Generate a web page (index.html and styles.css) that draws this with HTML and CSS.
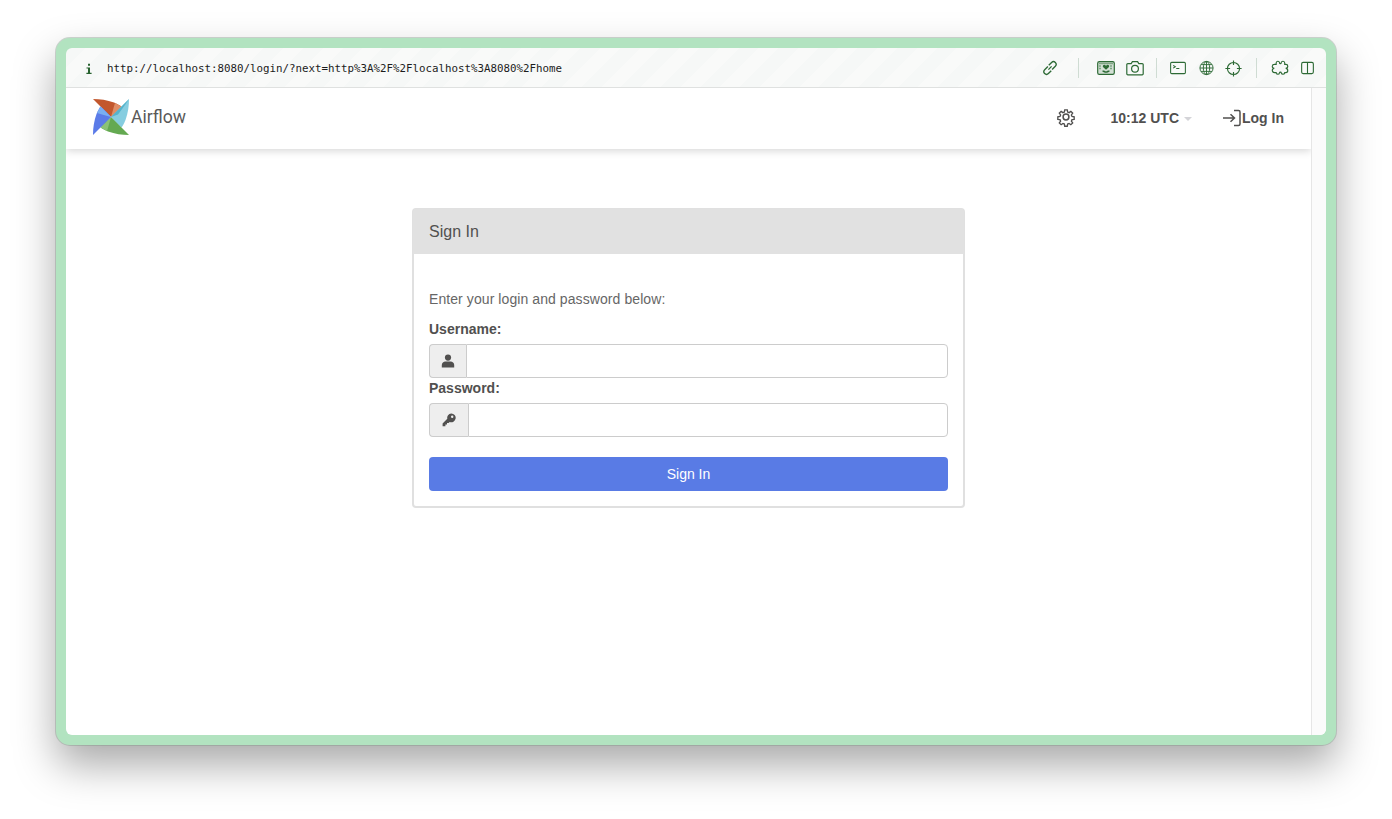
FILE: index.html
```html
<!DOCTYPE html>
<html>
  <head>
    <title>Airflow - Sign In</title>
    <meta charset="utf-8" />
    <link rel="stylesheet" href="styles.css">
  </head>
  <body>
    <div class="frame">
      <div class="toolbar">
        <svg class="info" viewBox="0 0 8 12"><path d="M3 .8h2v2H3zM1.500 4.400H5v5.400h1.600V11H1.400V9.800H3V5.600H1.500z"/></svg>
        <span class="url">http://localhost:8080/login/?next=http%3A%2F%2Flocalhost%3A8080%2Fhome</span>
        <div class="tools">
          <svg class="tool tool-link" viewBox="0 0 18 18"><path d="M7.200 10.800 10.800 7.200M6.600 7.400 3 11a3 3 0 0 0 0 4.200 3 3 0 0 0 4.200 0l3.200-3.200M7.600 6l3.200-3.200a3 3 0 0 1 4.200 0 3 3 0 0 1 0 4.200L11.400 10.600"/></svg>
          <i class="sep sep-a"></i>
          <svg class="tool tool-shot" viewBox="0 0 18 16"><rect x=".7" y="1.700" width="16.600" height="12.600" rx="1.600" fill="#d3e0d5"/><path class="dots" d="M2.500 3.500h13M2.500 6h2M13.500 6h2M2.500 8.500h2M13.500 8.500h2"/><path class="solid" d="M9 9.800 6 7a1.500 1.500 0 0 1 2-2.100l1 .8 1-.8A1.500 1.500 0 0 1 12 7z"/><path class="solid" d="M5.500 10.500h1.500l2 1 2-1h1.500v1.200l-2.500 1h-2l-2.500-1z"/></svg>
          <svg class="tool tool-camera" viewBox="0 0 18 16"><path d="M1.800 3.600h3.400L6.400 1.600h5.200l1.200 2h3.400a1 1 0 0 1 1 1v9.200a1 1 0 0 1-1 1H1.800a1 1 0 0 1-1-1V4.600a1 1 0 0 1 1-1z"/><circle cx="9" cy="8.800" r="3.400"/></svg>
          <i class="sep sep-b"></i>
          <svg class="tool tool-term" viewBox="0 0 18 16"><rect x=".7" y="1.700" width="16.600" height="12.600" rx="1.200"/><path d="M3.600 5 6 6.600 3.600 8.200M7 8.600h3.500"/></svg>
          <svg class="tool tool-globe" viewBox="0 0 16 16"><circle cx="8" cy="8" r="7"/><ellipse cx="8" cy="8" rx="3.400" ry="7"/><path d="M8 1v14M1 8h14M2.200 4.400h11.600M2.200 11.600h11.600"/></svg>
          <svg class="tool tool-target" viewBox="0 0 18 18"><circle cx="9" cy="9" r="6.400"/><path d="M9 .4v5M9 12.600v5M.4 9h5M12.600 9h5"/></svg>
          <i class="sep sep-c"></i>
          <svg class="tool tool-puzzle" viewBox="0 0 20 16"><path d="M6.500 2.800c0-2.400 3.400-2.400 3.500-.4 0 1.400 1.800 1.400 1.800 0 .1-2 3.700-2 3.700.4v1.400h1.200c2.600 0 2.800 4-.2 4.200 3 .2 2.800 4.400.2 4.400h-1.200v.4c0 1.600-3.200 1.800-3.500.2-.3-1.400-1.900-1.400-2.100 0-.3 1.600-3.400 1.400-3.400-.2v-.4H4.800c-3 0-3.300-4.200-.3-4.400-3-.2-2.700-4.200.3-4.200h1.700z"/></svg>
          <svg class="tool tool-split" viewBox="0 0 14 14"><rect x=".7" y="1" width="12.600" height="12" rx="1.600"/><path d="M7 1v12"/></svg>
        </div>
      </div>
      <div class="viewport">
        <div class="page">
          <nav class="navbar">
            <a class="brand">
              <svg class="pinwheel" viewBox="0 0 36 36">
                <path fill="#c2572d" d="M0 0C7 0 14 1 21 3.500 24 4.800 26.500 6 28.500 7.500 26 11 22 14.500 18 18z"/>
                <path fill="#e08d65" d="M22 4 28.500 7.500 18 18 20.500 9z"/>
                <path fill="#86cde0" d="M36 0C36 7 35 14 32.500 21 31.200 24 30 26.500 28.500 28.500 25 26 21.500 22 18 18z"/>
                <path fill="#55b3cc" d="M36 0 18 18 25 15.500 32 6z"/>
                <path fill="#64a951" d="M36 36C29 36 22 35 15 32.500 12 31.200 9.500 30 7.500 28.500 10 25 14 21.500 18 18z"/>
                <path fill="#8bc276" d="M14 32 7.500 28.500 18 18 15.500 27z"/>
                <path fill="#5b7be8" d="M0 36C0 29 1 22 3.500 15 4.800 12 6 9.500 7.500 7.500 11 10 14.500 14 18 18z"/>
                <path fill="#79aef2" d="M4 14 7.500 7.500 18 18 9 15.500z"/>
              </svg>
              <span class="brand-name">Airflow</span>
            </a>
            <div class="nav-right">
              <svg class="gear" viewBox="0 0 24 24"><path d="M10.300 2.500h3.400l.5 2.900 1.900.8 2.400-1.700 2.400 2.400-1.700 2.400.8 1.900 2.900.5v3.400l-2.900.5-.8 1.900 1.700 2.400-2.400 2.400-2.400-1.700-1.900.8-.5 2.900h-3.400l-.5-2.900-1.900-.8-2.400 1.700-2.400-2.400 1.700-2.400-.8-1.900-2.900-.5v-3.400l2.900-.5.8-1.900-1.700-2.400 2.400-2.400 2.400 1.700 1.900-.8z" transform="translate(12 12) scale(.9) translate(-12 -12)"/><circle cx="12" cy="12" r="3.500"/></svg>
              <span class="clock">10:12 UTC<i class="caret"></i></span>
              <a class="login">
                <svg class="login-icon" viewBox="0 0 19 18"><path d="M1 9h11M8.500 5.200 12.500 9l-4 3.800M12 1.500h4.500a1.500 1.500 0 0 1 1.500 1.500v12a1.500 1.500 0 0 1-1.500 1.500H12"/></svg>Log In
              </a>
            </div>
          </nav>
          <main class="content">
            <section class="panel">
              <div class="panel-heading">Sign In</div>
              <form class="panel-body">
                <p class="hint">Enter your login and password below:</p>
                <label class="field-label">Username:</label>
                <div class="input-group">
                  <span class="addon addon-user">
                    <svg class="addon-icon" viewBox="0 0 14 14"><circle cx="7" cy="3.600" r="3.100"/><path d="M.8 13.400V11c0-2.200 1.800-3.600 3.600-3.600h5.200c1.800 0 3.600 1.400 3.600 3.600v2.400z"/></svg>
                  </span>
                  <input class="input" type="text">
                </div>
                <label class="field-label">Password:</label>
                <div class="input-group">
                  <span class="addon addon-key">
                    <svg class="addon-icon" viewBox="0 0 14 14"><path fill-rule="evenodd" d="M9.200.4a4.400 4.400 0 1 1-1.500 8.500L6.600 10H5v1.600H3.400v1.600H.6v-2.700l4.700-4.700A4.400 4.400 0 0 1 9.200.4zm1 2.200a1.200 1.200 0 1 0 0 2.400 1.200 1.200 0 0 0 0-2.400z"/></svg>
                  </span>
                  <input class="input" type="password">
                </div>
                <button class="submit" type="button">Sign In</button>
              </form>
            </section>
          </main>
        </div>
        <div class="scroll-track"></div>
      </div>
    </div>
  </body>
</html>
```

FILE: styles.css
```css
* {
  box-sizing: border-box;
}

html,
body {
  height: 100%;
}

body {
  margin: 0;
  padding: 38px 56px 74px 56px;
  background: white;
  overflow: hidden;
  font: 14px/20px "Liberation Sans", Arial, sans-serif;
  color: #51504f;
}

.frame {
  display: flex;
  flex-direction: column;
  height: 100%;
  border: 10px solid #b2e3c0;
  border-radius: 14px;
  background: #b2e3c0;
  box-shadow: 0 0 0 1px rgba(120, 140, 125, 0.35), 0 20px 42px rgba(0, 0, 0, 0.34);
  overflow: hidden;
}

.toolbar {
  display: flex;
  align-items: center;
  flex: none;
  height: 40px;
  padding: 0 12px 0 19px;
  border-bottom: 1px solid #dfe1e0;
  border-radius: 6px 6px 0 0;
  background: repeating-linear-gradient(135deg, #f6f8f7 0, #f6f8f7 14px, #f9faf9 14px, #f9faf9 28px);
}

.info {
  width: 8px;
  height: 12px;
  margin-top: 2px;
  fill: #27622f;
}

.url {
  margin: 2px 0 0 14px;
  font: 10.8px/14px "DejaVu Sans Mono", monospace;
  color: #1c1c1c;
}

.tools {
  display: flex;
  align-items: center;
  margin: 1px 0 0 auto;
}

.tool {
  display: block;
  height: 16px;
  fill: none;
  stroke: #2d6a35;
  stroke-width: 1.200;
}

.tool .solid {
  fill: #2d6a35;
  stroke: none;
}

.tool .dots {
  stroke-width: 1.300;
  stroke-dasharray: 1 1;
}

.tool-link { width: 16px; stroke-width: 1.500; }
.tool-shot { width: 18px; }
.tool-camera { width: 18px; margin-left: 11px; }
.tool-term { width: 16px; }
.tool-globe { width: 15px; margin-left: 13px; stroke-width: 1; }
.tool-target { width: 17px; height: 17px; margin-left: 11px; }
.tool-puzzle { width: 19px; }
.tool-split { width: 13px; margin-left: 12px; }

.sep {
  width: 1px;
  height: 20px;
  background: #cfdcd3;
}

.sep-a { margin: 0 18px 0 20px; }
.sep-b { margin: 0 13px 0 12px; }
.sep-c { margin: 0 13px 0 14px; }

.viewport {
  display: flex;
  flex: 1;
  min-height: 0;
  border-radius: 0 0 6px 6px;
  background: white;
  overflow: hidden;
}

.page {
  flex: 1;
  min-width: 0;
}

.scroll-track {
  flex: none;
  width: 15px;
  border-left: 1px solid #e6e6e6;
  background: #fbfbfb;
}

.navbar {
  display: flex;
  align-items: center;
  justify-content: space-between;
  height: 61px;
  padding: 0 27px;
  background: white;
  box-shadow: 0 2px 8px rgba(0, 0, 0, 0.16);
}

.brand {
  display: flex;
  align-items: center;
  gap: 2px;
  padding-bottom: 4px;
}

.pinwheel {
  width: 36px;
  height: 36px;
}

.brand-name {
  font: 17.6px/20px Roboto, sans-serif;
  color: #5a5958;
}

.nav-right {
  display: flex;
  align-items: center;
  padding-bottom: 1px;
  font-weight: bold;
}

.gear {
  width: 20px;
  height: 20px;
  margin-bottom: 2px;
  fill: none;
  stroke: #51504f;
  stroke-width: 1.800;
}

.clock {
  display: flex;
  align-items: center;
  margin-left: 35px;
}

.caret {
  width: 0;
  height: 0;
  margin: 2px 0 0 5px;
  border-top: 4px solid #d4d4d8;
  border-left: 4px solid transparent;
  border-right: 4px solid transparent;
}

.login {
  display: flex;
  align-items: center;
  margin-left: 30px;
}

.login-icon {
  width: 19px;
  height: 18px;
  margin-right: 1px;
  fill: none;
  stroke: #51504f;
  stroke-width: 1.500;
}

.content {
  padding-top: 59px;
}

.panel {
  width: 553px;
  margin: 0 0 0 346px;
  border: 2px solid #e0e0e0;
  border-radius: 4px;
  background: white;
}

.panel-heading {
  height: 45px;
  margin: -1px -1px 0 -1px;
  padding: 13px 16px;
  font-size: 16px;
  background: #e1e1e1;
  border-radius: 3px 3px 0 0;
}

.panel-body {
  padding: 35px 15px 15px 15px;
}

.hint {
  margin: 0 0 10px 0;
  color: #666;
  letter-spacing: 0.08px;
}

.field-label {
  display: block;
  margin-bottom: 5px;
  font-weight: bold;
}

.input-group {
  display: flex;
  height: 34px;
}

.addon {
  display: flex;
  align-items: center;
  justify-content: center;
  flex: none;
  border: 1px solid #ccc;
  border-right: 0;
  border-radius: 4px 0 0 4px;
  background: #eee;
}

.addon-user { width: 37px; }
.addon-key { width: 39px; }

.addon-icon {
  width: 14px;
  height: 14px;
  fill: #51504f;
}

.input {
  flex: 1;
  min-width: 0;
  border: 1px solid #ccc;
  border-radius: 0 4px 4px 0;
  background: white;
}

.submit {
  display: block;
  width: 100%;
  height: 34px;
  margin-top: 20px;
  border: 0;
  border-radius: 4px;
  background: #597be5;
  color: white;
  font: 14px/20px "Liberation Sans", Arial, sans-serif;
}
```
